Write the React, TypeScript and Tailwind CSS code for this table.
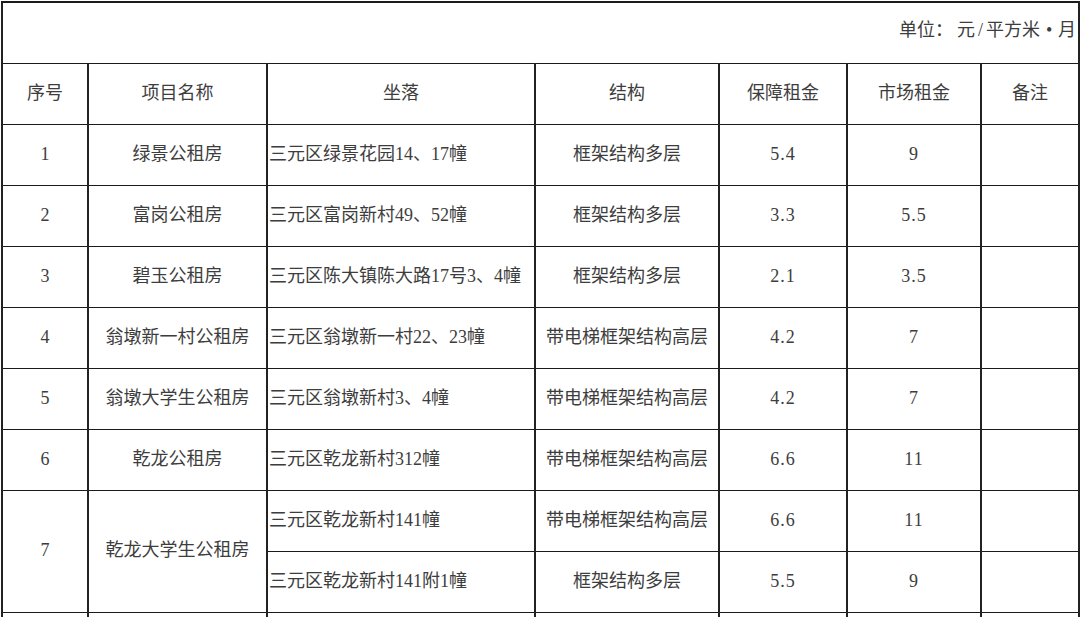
import React from "react";

type Row = {
  no?: string;
  name?: string;
  span?: number;
  addr: string;
  struct: string;
  a: string;
  b: string;
};

const rows: Row[] = [
  { no: "1", name: "绿景公租房", addr: "三元区绿景花园14、17幢", struct: "框架结构多层", a: "5.4", b: "9" },
  { no: "2", name: "富岗公租房", addr: "三元区富岗新村49、52幢", struct: "框架结构多层", a: "3.3", b: "5.5" },
  { no: "3", name: "碧玉公租房", addr: "三元区陈大镇陈大路17号3、4幢", struct: "框架结构多层", a: "2.1", b: "3.5" },
  { no: "4", name: "翁墩新一村公租房", addr: "三元区翁墩新一村22、23幢", struct: "带电梯框架结构高层", a: "4.2", b: "7" },
  { no: "5", name: "翁墩大学生公租房", addr: "三元区翁墩新村3、4幢", struct: "带电梯框架结构高层", a: "4.2", b: "7" },
  { no: "6", name: "乾龙公租房", addr: "三元区乾龙新村312幢", struct: "带电梯框架结构高层", a: "6.6", b: "11" },
  { no: "7", name: "乾龙大学生公租房", span: 2, addr: "三元区乾龙新村141幢", struct: "带电梯框架结构高层", a: "6.6", b: "11" },
  { addr: "三元区乾龙新村141附1幢", struct: "框架结构多层", a: "5.5", b: "9" },
];

const cell = "border-x-2 border-y border-x-[#222] border-y-[#1a1a1a] p-0 pb-[2px] align-middle";
const num = "tracking-[1px]";

export default function App() {
  return (
    <div
      className="w-[1080px] h-[617px] overflow-hidden bg-white text-[#3d3d3d] text-[18px] leading-none"
      style={{ fontFamily: '"Liberation Serif", "Noto Sans CJK SC", serif' }}
    >
      <table className="table-fixed border-collapse ml-[1px] mt-[1px] w-[1077px]">
        <colgroup>
          <col className="w-[86px]" />
          <col className="w-[179px]" />
          <col className="w-[268px]" />
          <col className="w-[184px]" />
          <col className="w-[128px]" />
          <col className="w-[134px]" />
          <col className="w-[98px]" />
        </colgroup>
        <tbody>
          <tr className="h-[61px]">
            <td colSpan={7} className={`${cell} border-t-2 text-right pr-[2px] pb-[5px]`}>
              单位：<span className="inline-block w-[4px]"></span>元<span className="inline-block w-[11px] text-center">/</span>平方米<span className="inline-block w-[18px] text-center">•</span>月
            </td>
          </tr>
          <tr className="h-[61px] text-center">
            <td className={cell}>序号</td>
            <td className={cell}>项目名称</td>
            <td className={cell}>坐落</td>
            <td className={cell}>结构</td>
            <td className={cell}>保障租金</td>
            <td className={cell}>市场租金</td>
            <td className={cell}>备注</td>
          </tr>
          {rows.map((r, i) => (
            <tr key={i} className="h-[61px] text-center">
              {r.no !== undefined && (
                <td rowSpan={r.span ?? 1} className={cell}>
                  {r.no}
                </td>
              )}
              {r.name !== undefined && (
                <td rowSpan={r.span ?? 1} className={cell}>
                  {r.name}
                </td>
              )}
              <td className={`${cell} text-left pl-[1px] whitespace-nowrap`}>{r.addr}</td>
              <td className={cell}>{r.struct}</td>
              <td className={cell}>
                <span className={num}>{r.a}</span>
              </td>
              <td className={cell}>
                <span className={num}>{r.b}</span>
              </td>
              <td className={cell}></td>
            </tr>
          ))}
          <tr className="h-[30px]">
            <td className={cell}></td>
            <td className={cell}></td>
            <td className={cell}></td>
            <td className={cell}></td>
            <td className={cell}></td>
            <td className={cell}></td>
            <td className={cell}></td>
          </tr>
        </tbody>
      </table>
    </div>
  );
}
